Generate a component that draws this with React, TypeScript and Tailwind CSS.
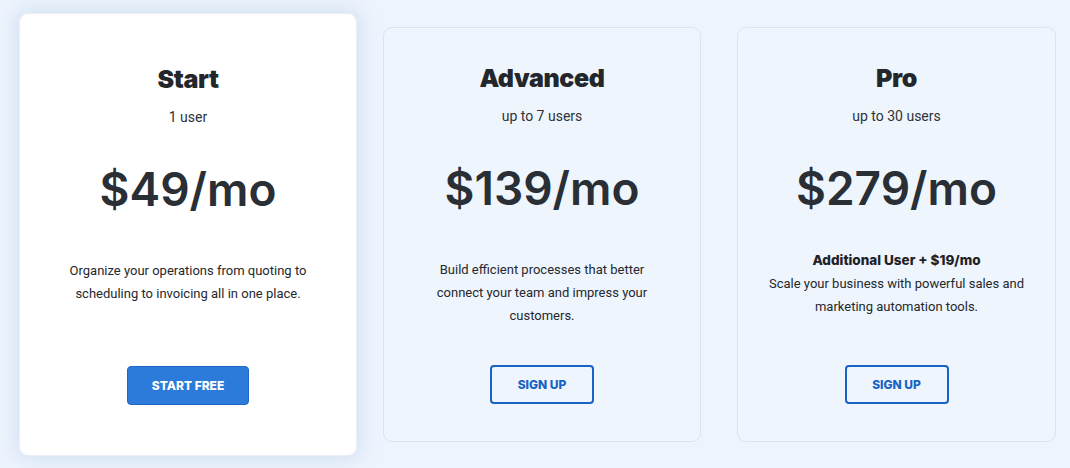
import React from "react";

type Plan = {
  name: string;
  users: string;
  price: string;
  extra?: string;
  desc: string[];
  cta: string;
  featured?: boolean;
};

const plans: Plan[] = [
  {
    name: "Start",
    users: "1 user",
    price: "$49/mo",
    desc: ["Organize your operations from quoting to", "scheduling to invoicing all in one place."],
    cta: "START FREE",
    featured: true,
  },
  {
    name: "Advanced",
    users: "up to 7 users",
    price: "$139/mo",
    desc: ["Build efficient processes that better", "connect your team and impress your", "customers."],
    cta: "SIGN UP",
  },
  {
    name: "Pro",
    users: "up to 30 users",
    price: "$279/mo",
    extra: "Additional User + $19/mo",
    desc: ["Scale your business with powerful sales and", "marketing automation tools."],
    cta: "SIGN UP",
  },
];

function Card({ plan }: { plan: Plan }) {
  const outer = plan.featured
    ? "-mx-[10px] -my-[14px] bg-white rounded-[9px] shadow-[0_0_18px_4px_rgba(170,195,225,0.35)] pt-[49px] pb-[50px] border border-[#e9eff6]"
    : "bg-[#eef5fd] rounded-[9px] border border-[#dbe4ee] pt-[34px] pb-[35px]";
  return (
    <div className={`flex flex-col items-center ${outer}`}>
      <h2 className="font-['Inter','Noto_Sans',sans-serif] text-[25px] leading-[32px] font-black text-[#23262b] tracking-[-0.4px]">
        {plan.name}
      </h2>
      <div className="mt-[12px] font-['Roboto','Noto_Sans',sans-serif] text-[14px] leading-[20px] text-[#2f3238]">
        {plan.users}
      </div>
      <div className="mt-[39px] font-['Inter','Noto_Sans',sans-serif] text-[46px] leading-[46px] font-semibold text-[#2a2e35]">
        {plan.price}
      </div>
      <div className="mt-[47px] h-[107px] w-full flex flex-col items-center font-['Roboto','Noto_Sans',sans-serif] text-[13px] leading-[23px] text-[#25282d]">
        <div className={plan.extra ? "-mt-[9px] flex flex-col items-center" : "flex flex-col items-center"}>
          {plan.extra && (
            <div className="font-['Inter','Noto_Sans',sans-serif] text-[13.5px] font-extrabold text-[#1f2226]">
              {plan.extra}
            </div>
          )}
          {plan.desc.map((l) => (
            <div key={l} className="whitespace-nowrap">
              {l}
            </div>
          ))}
        </div>
      </div>
      {plan.featured ? (
        <button className="h-[39px] w-[122px] rounded-[4px] bg-[#2c7ad9] border border-[#1f66c6] text-white font-['Inter','Noto_Sans',sans-serif] text-[12px] font-extrabold">
          {plan.cta}
        </button>
      ) : (
        <button className="h-[39px] w-[104px] rounded-[4px] border-2 border-[#1863c4] bg-transparent text-[#1863c4] font-['Inter','Noto_Sans',sans-serif] text-[12px] font-extrabold">
          {plan.cta}
        </button>
      )}
    </div>
  );
}

export default function App() {
  return (
    <div className="w-[1070px] h-[468px] bg-[#edf4fd] overflow-hidden">
      <div className="grid grid-cols-[318px_318px_319px] gap-x-[36px] pl-[29px] pt-[27px]">
        {plans.map((p) => (
          <Card key={p.name} plan={p} />
        ))}
      </div>
    </div>
  );
}
